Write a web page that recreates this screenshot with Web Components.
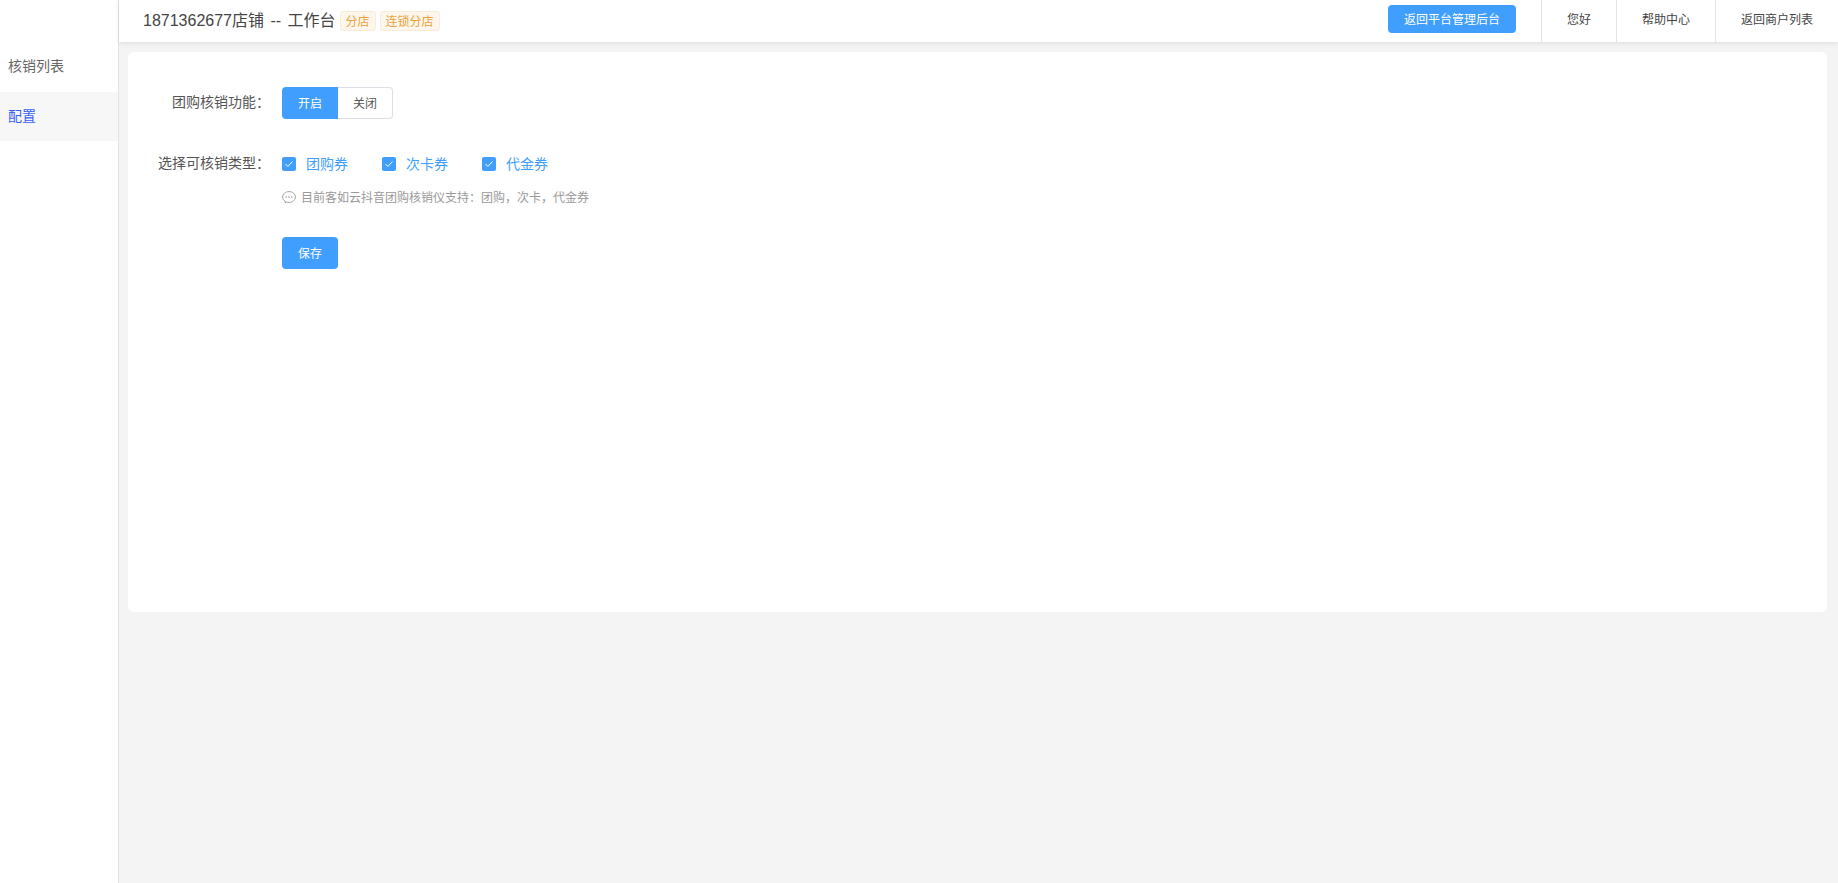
<!DOCTYPE html>
<html lang="zh">
<head>
<meta charset="utf-8">
<title>配置</title>
<style>
  html, body { margin: 0; height: 100%; }
  body {
    background: #f4f4f4;
    color: #333;
    font-family: "Liberation Sans", "Noto Sans CJK SC", sans-serif;
    overflow: hidden;
  }
</style>
</head>
<body>
<app-shell>
  <side-menu slot="side">
    <menu-item>核销列表</menu-item>
    <menu-item active>配置</menu-item>
  </side-menu>
  <top-bar slot="top" title-text="1871362677店铺 -- 工作台">
    <shop-tag slot="tags">分店</shop-tag>
    <shop-tag slot="tags">连锁分店</shop-tag>
    <blue-button slot="action" wide>返回平台管理后台</blue-button>
    <top-link slot="links" width="75">您好</top-link>
    <top-link slot="links" width="99">帮助中心</top-link>
    <top-link slot="links" width="123">返回商户列表</top-link>
  </top-bar>
  <settings-card>
    <form-row label="团购核销功能：">
      <on-off-switch></on-off-switch>
    </form-row>
    <form-row label="选择可核销类型：" class="types">
      <check-group>
        <check-item>团购券</check-item>
        <check-item>次卡券</check-item>
        <check-item>代金券</check-item>
      </check-group>
      <help-note>目前客如云抖音团购核销仪支持：团购，次卡，代金券</help-note>
    </form-row>
    <form-row class="save">
      <blue-button>保存</blue-button>
    </form-row>
  </settings-card>
</app-shell>

<script>
class AppShell extends HTMLElement {
  constructor() {
    super();
    this.attachShadow({ mode: 'open' });
    this.shadowRoot.innerHTML = `
      <style>
        :host {
          display: grid;
          grid-template-columns: 119px 1fr;
          grid-template-rows: 42px 1fr;
          height: 883px;
        }
        .side { grid-row: 1 / 3; display: flex; }
        .top { display: flex; position: relative; z-index: 1; }
        main { padding: 10px 11px 0 9px; }
      </style>
      <div class="side"><slot name="side"></slot></div>
      <div class="top"><slot name="top"></slot></div>
      <main><slot></slot></main>
    `;
  }
}

class SideMenu extends HTMLElement {
  constructor() {
    super();
    this.attachShadow({ mode: 'open' });
    this.shadowRoot.innerHTML = `
      <style>
        :host {
          display: block;
          box-sizing: border-box;
          width: 119px;
          padding-top: 42px;
          background: #fff;
          border-right: 1px solid #e3e3e3;
        }
      </style>
      <slot></slot>
    `;
  }
}

class MenuItem extends HTMLElement {
  constructor() {
    super();
    this.attachShadow({ mode: 'open' });
    this.shadowRoot.innerHTML = `
      <style>
        :host {
          display: flex;
          align-items: center;
          box-sizing: border-box;
          height: 50px;
          padding: 0 0 4px 8px;
          font-size: 14px;
          color: #666;
        }
        :host([active]) {
          height: 49px;
          background: #f7f7f7;
          color: #3a62f5;
        }
      </style>
      <slot></slot>
    `;
  }
}

class TopBar extends HTMLElement {
  constructor() {
    super();
    this.attachShadow({ mode: 'open' });
    this.shadowRoot.innerHTML = `
      <style>
        :host {
          display: flex;
          flex: 1;
          align-items: stretch;
          height: 42px;
          padding-left: 24px;
          background: #fff;
          box-shadow: 0 1px 5px rgba(0, 0, 0, 0.1);
        }
        .title {
          display: flex;
          align-items: center;
          flex: 1;
          font-size: 16px;
          color: #444;
        }
        #title { word-spacing: 2px; white-space: nowrap; position: relative; top: -2px; }
        .tags { display: flex; gap: 4px; margin-left: 4px; }
        .action { display: flex; align-items: center; margin-right: 25px; padding-bottom: 4px; }
        .links { display: flex; }
      </style>
      <div class="title"><span id="title"></span><div class="tags"><slot name="tags"></slot></div></div>
      <div class="action"><slot name="action"></slot></div>
      <div class="links"><slot name="links"></slot></div>
    `;
  }

  connectedCallback() {
    this.shadowRoot.querySelector('#title').textContent = this.getAttribute('title-text');
  }
}

class ShopTag extends HTMLElement {
  constructor() {
    super();
    this.attachShadow({ mode: 'open' });
    this.shadowRoot.innerHTML = `
      <style>
        :host {
          display: flex;
          align-items: center;
          box-sizing: border-box;
          height: 20px;
          padding: 0 5px 2px;
          font-size: 12px;
          color: #eda23a;
          background: #fdf6ec;
          border: 1px solid #faecd8;
          border-radius: 3px;
        }
      </style>
      <slot></slot>
    `;
  }
}

class TopLink extends HTMLElement {
  constructor() {
    super();
    this.attachShadow({ mode: 'open' });
    this.shadowRoot.innerHTML = `
      <style>
        :host {
          display: flex;
          align-items: center;
          justify-content: center;
          box-sizing: border-box;
          padding-bottom: 5px;
          border-left: 1px solid #e3e3e3;
          font-size: 12px;
          color: #444;
        }
      </style>
      <slot></slot>
    `;
  }

  connectedCallback() {
    this.style.width = this.getAttribute('width') + 'px';
  }
}

class BlueButton extends HTMLElement {
  constructor() {
    super();
    this.attachShadow({ mode: 'open' });
    this.shadowRoot.innerHTML = `
      <style>
        :host {
          display: inline-flex;
          align-items: center;
          justify-content: center;
          box-sizing: border-box;
          width: 56px;
          height: 32px;
          padding-bottom: 1px;
          font-size: 12px;
          color: #fff;
          background: #409eff;
          border-radius: 4px;
        }
        :host([wide]) { width: 128px; height: 28px; }
      </style>
      <slot></slot>
    `;
  }
}

class SettingsCard extends HTMLElement {
  constructor() {
    super();
    this.attachShadow({ mode: 'open' });
    this.shadowRoot.innerHTML = `
      <style>
        :host {
          display: block;
          box-sizing: border-box;
          height: 560px;
          padding-top: 35px;
          background: #fff;
          border-radius: 6px;
        }
        ::slotted(.types) { margin-top: 29px; }
        ::slotted(.save) { margin-top: 28px; }
      </style>
      <slot></slot>
    `;
  }
}

class FormRow extends HTMLElement {
  constructor() {
    super();
    this.attachShadow({ mode: 'open' });
    this.shadowRoot.innerHTML = `
      <style>
        :host {
          display: grid;
          grid-template-columns: 142px 1fr;
          column-gap: 12px;
        }
        label {
          font-size: 14px;
          line-height: 30px;
          color: #555;
          text-align: right;
          white-space: nowrap;
        }
      </style>
      <label></label>
      <div><slot></slot></div>
    `;
  }

  connectedCallback() {
    this.shadowRoot.querySelector('label').textContent = this.getAttribute('label') || '';
  }
}

class OnOffSwitch extends HTMLElement {
  constructor() {
    super();
    this.attachShadow({ mode: 'open' });
    this.shadowRoot.innerHTML = `
      <style>
        :host {
          display: inline-flex;
          vertical-align: top;
          height: 32px;
          font-size: 12px;
        }
        span {
          display: flex;
          align-items: center;
          justify-content: center;
          box-sizing: border-box;
          width: 56px;
          padding-bottom: 1px;
        }
        .on { background: #409eff; color: #fff; border-radius: 4px 0 0 4px; }
        .off {
          width: 55px;
          color: #555;
          background: #fff;
          border: 1px solid #dcdfe6;
          border-left: 0;
          border-radius: 0 4px 4px 0;
        }
      </style>
      <span class="on">开启</span><span class="off">关闭</span>
    `;
  }
}

class CheckGroup extends HTMLElement {
  constructor() {
    super();
    this.attachShadow({ mode: 'open' });
    this.shadowRoot.innerHTML = `
      <style>
        :host { display: flex; gap: 34px; height: 32px; align-items: center; }
      </style>
      <slot></slot>
    `;
  }
}

class CheckItem extends HTMLElement {
  constructor() {
    super();
    this.attachShadow({ mode: 'open' });
    this.shadowRoot.innerHTML = `
      <style>
        :host {
          display: inline-flex;
          align-items: center;
          gap: 10px;
          font-size: 14px;
          color: #409eff;
        }
        i {
          display: flex;
          width: 14px;
          height: 14px;
          background: #409eff;
          border-radius: 2px;
        }
        span { padding-bottom: 2px; }
      </style>
      <i><svg width="14" height="14" viewBox="0 0 14 14" fill="none"><path d="M3.500 7l2.400 2.500 4.600-5" stroke="#fff" stroke-width="1"/></svg></i>
      <span><slot></slot></span>
    `;
  }
}

class HelpNote extends HTMLElement {
  constructor() {
    super();
    this.attachShadow({ mode: 'open' });
    this.shadowRoot.innerHTML = `
      <style>
        :host {
          display: flex;
          align-items: center;
          gap: 5px;
          margin-top: 5px;
          height: 24px;
          font-size: 12px;
          color: #999;
        }
        svg { flex: none; }
        span { padding-bottom: 2px; }
      </style>
      <svg width="14" height="12" viewBox="0 0 14 12" fill="none">
        <path d="M3.300 10.300C1.700 9.400.6 7.900.6 6 .6 3 3.400.6 7 .6s6.400 2.400 6.400 5.400-2.800 5.400-6.400 5.400c-.9 0-1.700-.1-2.400-.4l-1.600.8z" stroke="#999" stroke-width=".9"/>
        <circle cx="4.300" cy="6" r=".8" fill="#999"/><circle cx="7" cy="6" r=".8" fill="#999"/><circle cx="9.700" cy="6" r=".8" fill="#999"/>
      </svg>
      <span><slot></slot></span>
    `;
  }
}

customElements.define('app-shell', AppShell);
customElements.define('side-menu', SideMenu);
customElements.define('menu-item', MenuItem);
customElements.define('top-bar', TopBar);
customElements.define('shop-tag', ShopTag);
customElements.define('top-link', TopLink);
customElements.define('blue-button', BlueButton);
customElements.define('settings-card', SettingsCard);
customElements.define('form-row', FormRow);
customElements.define('on-off-switch', OnOffSwitch);
customElements.define('check-group', CheckGroup);
customElements.define('check-item', CheckItem);
customElements.define('help-note', HelpNote);
</script>
</body>
</html>
